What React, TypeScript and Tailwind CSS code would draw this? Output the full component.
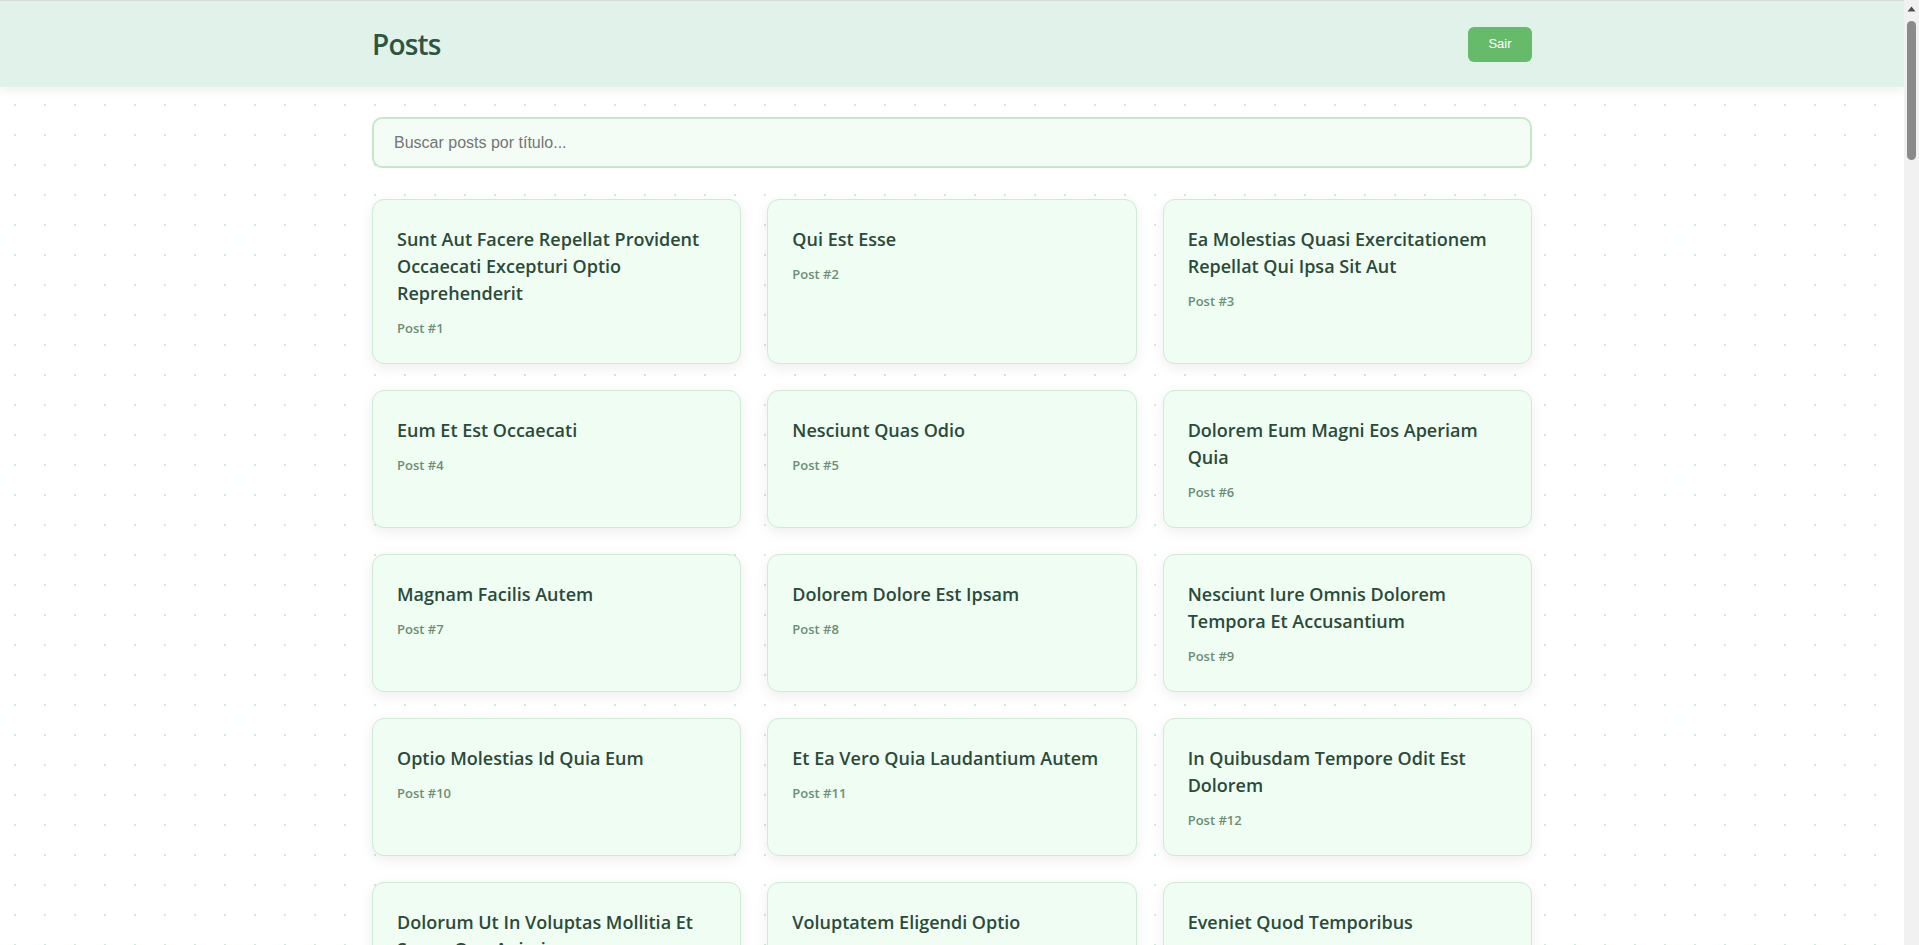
import React from "react";

const titles = [
  "sunt aut facere repellat provident occaecati excepturi optio reprehenderit",
  "qui est esse",
  "ea molestias quasi exercitationem repellat qui ipsa sit aut",
  "eum et est occaecati",
  "nesciunt quas odio",
  "dolorem eum magni eos aperiam quia",
  "magnam facilis autem",
  "dolorem dolore est ipsam",
  "nesciunt iure omnis dolorem tempora et accusantium",
  "optio molestias id quia eum",
  "et ea vero quia laudantium autem",
  "in quibusdam tempore odit est dolorem",
  "dolorum ut in voluptas mollitia et saepe quo animi",
  "voluptatem eligendi optio",
  "eveniet quod temporibus",
  "sint suscipit perspiciatis velit dolorum rerum ipsa laboriosam odio",
  "fugit voluptas sed molestias voluptatem provident",
  "voluptate et itaque vero tempora molestiae",
  "adipisci placeat illum aut reiciendis qui",
  "doloribus ad provident suscipit at",
  "asperiores ea ipsam voluptatibus modi minima quia sint",
  "dolor sint quo a velit explicabo quia nam",
  "maxime id vitae nihil numquam",
  "autem hic labore sunt dolores incidunt",
  "rem alias distinctio quo quis",
  "est et quae odit qui non",
  "quasi id et eos tenetur aut quo autem",
  "delectus ullam et corporis nulla voluptas sequi",
  "iusto eius quod necessitatibus culpa ea",
  "a quo magni similique perferendis",
  "ullam ut quidem id aut vel consequuntur",
  "doloremque illum aliquid sunt",
  "qui explicabo molestiae dolorem",
  "magnam ut rerum iure",
  "id nihil consequatur molestias animi provident",
  "fuga nam accusamus voluptas reiciendis itaque",
  "provident vel ut sit ratione est",
  "explicabo et eos deleniti nostrum ab id repellendus",
  "eos dolorem iste accusantium est eaque quam",
  "enim quo cumque",
  "non est facere",
  "commodi ullam sint et excepturi error explicabo praesentium voluptas",
  "eligendi iste nostrum consequuntur adipisci praesentium sit beatae perferendis",
  "optio dolor molestias sit",
  "ut numquam possimus omnis eius suscipit laudantium iure",
  "aut quo modi neque nostrum ducimus",
  "quibusdam cumque rem aut deserunt",
  "ut voluptatem illum ea doloribus itaque eos",
  "laborum non sunt aut ut assumenda perspiciatis voluptas",
  "repellendus qui recusandae incidunt voluptates tenetur qui omnis exercitationem",
  "soluta aliquam aperiam consequatur illo quis voluptas",
  "qui enim et consequuntur quia animi quis voluptate quibusdam",
  "ut quo aut ducimus alias",
  "sit asperiores ipsam eveniet odio non quia",
  "sit vel voluptatem et non libero",
  "qui et at rerum necessitatibus",
  "sed ab est est",
  "voluptatum itaque dolores nisi et quasi",
  "qui commodi dolor at maiores et quis id accusantium",
  "consequatur placeat omnis quisquam quia reprehenderit fugit veritatis facere",
  "voluptatem doloribus consectetur est ut ducimus",
  "beatae enim quia vel",
  "voluptas blanditiis repellendus animi ducimus error sapiente et suscipit",
  "et fugit quas eum in in aperiam quod",
  "consequatur id enim sunt et et",
  "repudiandae ea animi iusto",
  "aliquid eos sed fuga est maxime repellendus",
  "odio quis facere architecto reiciendis optio",
  "fugiat quod pariatur odit minima",
  "voluptatem laborum magni",
  "et iusto veniam et illum aut fuga",
  "sint hic doloribus consequatur eos non id",
  "consequuntur deleniti eos quia temporibus ab aliquid at",
  "enim unde ratione doloribus quas enim ut sit sapiente",
  "dignissimos eum dolor ut enim et delectus in",
  "doloremque officiis ad et non perferendis",
  "necessitatibus quasi exercitationem odio",
  "quam voluptatibus rerum veritatis",
  "pariatur consequatur quia magnam autem omnis non amet",
  "labore in ex et explicabo corporis aut quas",
  "tempora rem veritatis voluptas quo dolores vero",
  "laudantium voluptate suscipit sunt enim enim",
  "odit et voluptates doloribus alias odio et",
  "optio ipsam molestias necessitatibus occaecati facilis veritatis dolores aut",
  "dolore veritatis porro provident adipisci blanditiis et sunt",
  "placeat quia et porro iste",
  "nostrum quis quasi placeat",
  "sapiente omnis fugit eos",
  "sint soluta et vel magnam aut ut sed qui",
  "ad iusto omnis odit dolor voluptatibus",
  "aut amet sed",
  "ratione ex tenetur perferendis",
  "beatae soluta recusandae",
  "qui qui voluptates illo iste minima",
  "id minus libero illum nam ad officiis",
  "quaerat velit veniam amet cupiditate aut numquam ut sequi",
  "quas fugiat ut perspiciatis vero provident",
  "laboriosam dolor voluptates",
  "temporibus sit alias delectus eligendi possimus magni",
  "at nam consequatur ea labore ea harum",
];

function Scrollbar() {
  return (
    <div className="flex w-[15px] shrink-0 flex-col items-center bg-[#f1f1f1]">
      <div className="flex h-[17px] w-full items-center justify-center">
        <svg width="9" height="6" viewBox="0 0 9 6">
          <path d="M4.5 0.5 L8.5 5.5 L0.5 5.5 Z" fill="#505050" />
        </svg>
      </div>
      <div className="mt-[4px] h-[139px] w-[9px] rounded-full bg-[#8a8a8a]" />
    </div>
  );
}

export default function App() {
  return (
    <div className="flex h-screen overflow-hidden bg-white font-['Open_Sans',sans-serif]">
      <div className="min-w-0 flex-1 overflow-hidden bg-[radial-gradient(circle_at_15px_15px,#c4f0d9_1.3px,transparent_1.4px)] bg-[length:30px_30px]">
        <header className="h-[87px] border-t border-[#d7dcda] bg-[#e0f2e9] shadow-[0_3px_10px_rgba(0,0,0,0.07)]">
          <div className="mx-auto flex h-full max-w-[1160px] items-center justify-between">
            <h1 className="text-[28px] font-semibold leading-none tracking-[-0.8px] text-[#2d5541]">
              Posts
            </h1>
            <button className="h-[35px] w-[64px] rounded-[6px] bg-[#66bb6a] font-['Liberation_Sans',Arial,sans-serif] text-[13px] text-white">
              Sair
            </button>
          </div>
        </header>
        <main className="mx-auto max-w-[1160px] pt-[30px] pb-10">
          <input
            type="text"
            placeholder="Buscar posts por título..."
            className="mb-[31px] block h-[51px] w-full rounded-[10px] border-2 border-[#c8e6c9] bg-[#f3fdf5] px-[20px] font-['Liberation_Sans',Arial,sans-serif] text-[16px] text-[#333] placeholder:text-[#757575] outline-none"
          />
          <div className="grid grid-cols-3 gap-[26px]">
            {titles.map((t, i) => (
              <div
                key={i}
                className="rounded-[12px] border border-[#cfead5] bg-[#effdf3] px-6 pt-[26px] pb-[25px] shadow-[0_4px_14px_rgba(0,0,0,0.07)]"
              >
                <h2 className="mb-[11px] text-[18px] font-semibold capitalize leading-[27px] text-[#2b4a3a]">
                  {t}
                </h2>
                <p className="text-[13px] font-semibold leading-[20px] text-[#6b8f74]">
                  Post #{i + 1}
                </p>
              </div>
            ))}
          </div>
        </main>
      </div>
      <Scrollbar />
    </div>
  );
}
